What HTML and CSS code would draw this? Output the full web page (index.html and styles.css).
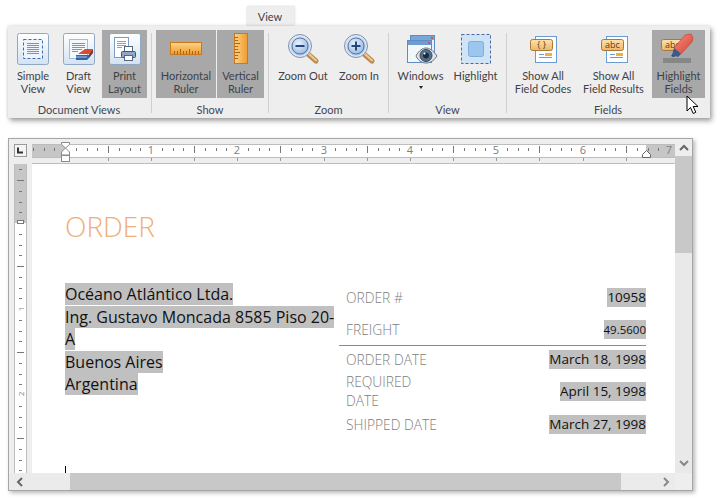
FILE: index.html
```html
<!DOCTYPE html>
<html lang="en">
<head>
<meta charset="utf-8">
<title>View ribbon</title>
<link rel="stylesheet" href="styles.css">
</head>
<body>
<svg class="defs" aria-hidden="true">
  <defs>
    <linearGradient id="gFrame" x1="0" y1="0" x2="0" y2="1"><stop offset="0" stop-color="#ffffff"/><stop offset="1" stop-color="#d3e2f2"/></linearGradient>
    <linearGradient id="gOrange" x1="0" y1="0" x2="0" y2="1"><stop offset="0" stop-color="#fbd487"/><stop offset="1" stop-color="#f09a2c"/></linearGradient>
    <linearGradient id="gOrangeH" x1="0" y1="0" x2="1" y2="0"><stop offset="0" stop-color="#fbd487"/><stop offset="1" stop-color="#f09a2c"/></linearGradient>
    <radialGradient id="gLens" cx=".4" cy=".35" r=".8"><stop offset="0" stop-color="#e9f2fb"/><stop offset="1" stop-color="#8fb2db"/></radialGradient>
    <linearGradient id="gLabel" x1="0" y1="0" x2="0" y2="1"><stop offset="0" stop-color="#fde3ae"/><stop offset="1" stop-color="#eeb566"/></linearGradient>
    <linearGradient id="gRed" x1="0" y1="0" x2="1" y2="1"><stop offset="0" stop-color="#f58d80"/><stop offset="1" stop-color="#d8412f"/></linearGradient>
    <g id="inchTicks" stroke="#777" stroke-width="1">
      <path d="M11.5 5v3M22.5 5v3M32.5 5v3M43.5 3v7M54.5 5v3M65.5 5v3M75.5 5v3"/>
    </g>
    <g id="vTicks" stroke="#777" stroke-width="1">
      <path d="M5 11.5h3M5 22.5h3M5 32.5h3M3 43.5h7M5 54.5h3M5 65.5h3M5 75.5h3"/>
    </g>
  </defs>
</svg>

<div class="tab">View</div>

<section class="ribbon">
  <div class="group">
    <div class="buttons">
      <div class="btn w44">
        <svg class="ico" width="34" height="32" viewBox="0 0 34 32"><rect x="1.5" y=".5" width="31" height="31" rx="2" fill="url(#gFrame)" stroke="#8ea9c6"/><rect x="7.5" y="6.5" width="19" height="19" fill="#eef4fb" stroke="#3b6db3" stroke-dasharray="3 2"/><path d="M11 10.5h12M11 12.5h12M11 14.5h12M11 16.5h12M11 18.5h12M11 20.5h12" stroke="#7c93b5"/></svg>
        <div class="lbl">Simple<br>View</div>
      </div>
      <div class="btn w45">
        <svg class="ico" width="34" height="32" viewBox="0 0 34 32"><rect x="1.5" y=".5" width="31" height="31" rx="2" fill="url(#gFrame)" stroke="#8ea9c6"/><rect x="7.5" y="6.5" width="18" height="19" fill="#f4f7fb" stroke="#a5bcd6"/><path d="M10 10.5h13M10 12.500h13M10 14.500h13M10 16.500h10M10 18.500h6" stroke="#7c93b5"/><path d="M16 21l7-5h8l-4 5z" fill="#d94a36"/><path d="M14 22h13v3l-2 2H14z" fill="#2f62a8"/><path d="M27 21l4-5v4l-4 5z" fill="#8a2f22"/><path d="M14 24h11" stroke="#a9c6ea"/></svg>
        <div class="lbl">Draft<br>View</div>
      </div>
      <div class="btn w45 on">
        <svg class="ico" width="34" height="32" viewBox="0 0 34 32"><rect x="1.5" y=".5" width="31" height="31" rx="2" fill="url(#gFrame)" stroke="#8ea9c6"/><rect x="6.500" y="4.500" width="14" height="20" fill="#fff" stroke="#7d9cc4"/><path d="M9 8.500h9M9 10.500h9M9 12.500h9M9 14.500h5" stroke="#8aa0c0"/><rect x="16.500" y="13.500" width="8" height="6" fill="#fff" stroke="#55667f"/><rect x="13.500" y="18.500" width="14" height="6" rx="1" fill="#8fa6c4" stroke="#44566f"/><rect x="16.500" y="22.500" width="8" height="5" fill="#fff" stroke="#55667f"/></svg>
        <div class="lbl">Print<br>Layout</div>
      </div>
    </div>
    <div class="gname">Document Views</div>
  </div>

  <div class="group">
    <div class="buttons">
      <div class="btn w60 on">
        <svg class="ico" width="34" height="32" viewBox="0 0 34 32"><rect x="1.500" y="9.500" width="31" height="12" fill="url(#gOrange)" stroke="#c9791c"/><path d="M5.500 21v-3M8.500 21v-3M11.500 21v-5M14.500 21v-3M17.500 21v-3M20.500 21v-5M23.500 21v-3M26.500 21v-3M29.500 21v-3" stroke="#a9620f"/></svg>
        <div class="lbl">Horizontal<br>Ruler</div>
      </div>
      <div class="btn w47 on">
        <svg class="ico" width="34" height="32" viewBox="0 0 34 32"><rect x="10.500" y=".5" width="13" height="30" fill="url(#gOrangeH)" stroke="#c9791c"/><path d="M11 4.500h3M11 7.500h3M11 10.500h5M11 13.500h3M11 16.500h3M11 19.500h5M11 22.500h3M11 25.500h3" stroke="#a9620f"/></svg>
        <div class="lbl">Vertical<br>Ruler</div>
      </div>
    </div>
    <div class="gname">Show</div>
  </div>

  <div class="group">
    <div class="buttons">
      <div class="btn w60">
        <svg class="ico" width="36" height="32" viewBox="0 0 36 32"><path d="M23 21l8 7" stroke="#b88a4e" stroke-width="5" stroke-linecap="round"/><path d="M23.500 20.500l7.500 7" stroke="#f0c995" stroke-width="2" stroke-linecap="round"/><circle cx="15" cy="13" r="10.500" fill="url(#gLens)" stroke="#dfe6ef" stroke-width="2"/><circle cx="15" cy="13" r="11.500" fill="none" stroke="#7d93b3"/><circle cx="15" cy="13" r="8" fill="url(#gLens)" stroke="#5379ad"/><path d="M10.500 13h9" stroke="#25467e" stroke-width="2"/></svg>
        <div class="lbl">Zoom Out</div>
      </div>
      <div class="btn w50">
        <svg class="ico" width="36" height="32" viewBox="0 0 36 32"><path d="M23 21l8 7" stroke="#b88a4e" stroke-width="5" stroke-linecap="round"/><path d="M23.500 20.500l7.500 7" stroke="#f0c995" stroke-width="2" stroke-linecap="round"/><circle cx="15" cy="13" r="10.500" fill="url(#gLens)" stroke="#dfe6ef" stroke-width="2"/><circle cx="15" cy="13" r="11.500" fill="none" stroke="#7d93b3"/><circle cx="15" cy="13" r="8" fill="url(#gLens)" stroke="#5379ad"/><path d="M10.500 13h9M15 8.500v9" stroke="#25467e" stroke-width="2"/></svg>
        <div class="lbl">Zoom In</div>
      </div>
    </div>
    <div class="gname">Zoom</div>
  </div>

  <div class="group">
    <div class="buttons">
      <div class="btn w55">
        <svg class="ico" width="40" height="32" viewBox="0 0 40 32"><rect x="9.500" y="2.500" width="24" height="20" fill="#e6f0fa" stroke="#5d8dc4"/><rect x="10" y="3" width="23" height="4" fill="#79a6d8"/><rect x="30" y="4" width="2" height="2" fill="#e0503a"/><rect x="6.500" y="7.500" width="24" height="22" fill="#f2f7fc" stroke="#5d8dc4"/><rect x="7" y="8" width="23" height="4" fill="#6d9cd2"/><rect x="27" y="9" width="2" height="2" fill="#e0503a"/><path d="M15 23c3-6 7-8 10-8s7 2 11 8c-4 6-8 7-11 7s-7-1-10-7z" fill="#dfe4ea" stroke="#6c7480"/><circle cx="25" cy="22.500" r="6" fill="#51708f" stroke="#3a4653"/><circle cx="25" cy="22.500" r="3" fill="#1e2a38"/><circle cx="23.500" cy="20.500" r="1" fill="#fff"/></svg>
        <div class="lbl">Windows<span class="caret"></span></div>
      </div>
      <div class="btn w53">
        <svg class="ico" width="32" height="32" viewBox="0 0 32 32"><rect x="1.500" y="1.500" width="29" height="29" fill="#cfe4f4" stroke="#4a68a8" stroke-dasharray="3 2"/><rect x="8.500" y="8.500" width="15" height="15" rx="2" fill="#9cc6ee" stroke="#7fadde"/></svg>
        <div class="lbl">Highlight</div>
      </div>
    </div>
    <div class="gname">View</div>
  </div>

  <div class="group last">
    <div class="buttons">
      <div class="btn w64">
        <svg class="ico" width="32" height="32" viewBox="0 0 32 32"><rect x="8.500" y="3.500" width="21" height="26" fill="#fff" stroke="#6b9bd0"/><rect x="3.500" y="6.500" width="22" height="11" rx="2" fill="url(#gLabel)" stroke="#a9793a"/><text class="tag" x="14.500" y="15" text-anchor="middle">{ }</text><path d="M12 21.500h5M12 24.500h13" stroke="#6b9bd0"/><rect x="18" y="20" width="7" height="3" fill="#eeb23c"/></svg>
        <div class="lbl">Show All<br>Field Codes</div>
      </div>
      <div class="btn w75">
        <svg class="ico" width="32" height="32" viewBox="0 0 32 32"><rect x="8.500" y="3.500" width="21" height="26" fill="#fff" stroke="#6b9bd0"/><rect x="3.500" y="6.500" width="22" height="11" rx="2" fill="url(#gLabel)" stroke="#a9793a"/><text class="tag" x="14.500" y="15" text-anchor="middle">abc</text><path d="M12 21.500h5M12 24.500h13" stroke="#6b9bd0"/><rect x="18" y="20" width="7" height="3" fill="#eeb23c"/></svg>
        <div class="lbl">Show All<br>Field Results</div>
      </div>
      <div class="btn w53 on">
        <svg class="ico" width="40" height="32" viewBox="0 0 40 32"><rect x="2.500" y="6.500" width="22" height="11" rx="2" fill="url(#gLabel)" stroke="#a9793a"/><text class="tag" x="13.500" y="15" text-anchor="middle">abc</text><rect x="4" y="25" width="28" height="5" fill="#878787"/><path d="M26 2l6-1 2 4-1 4-11 12-7-6z" fill="url(#gRed)" stroke="#c23a2a" stroke-width=".6"/><path d="M15 15l7 6-3 3-6-2z" fill="#3b5a8c"/><path d="M13 22l-1 1 3 1 1-1z" fill="#1f2f4d"/></svg>
        <div class="lbl">Highlight<br>Fields</div>
      </div>
    </div>
    <div class="gname">Fields</div>
  </div>
</section>

<svg class="pointer" width="14" height="20" viewBox="0 0 14 20"><path d="M1 1v15l3.500-3.500 2.700 6 2.600-1.200-2.600-5.800H12z" fill="#fff" stroke="#000" stroke-linejoin="round"/></svg>

<section class="window">
  <div class="corner"><div class="tabstop"><svg width="11" height="11" viewBox="0 0 11 11"><path d="M3 2.500v5h5" fill="none" stroke="#333" stroke-width="2"/></svg></div></div>

  <div class="hruler">
    <svg class="hticks" width="643" height="20" viewBox="0 0 643 20">
      <use href="#inchTicks" x="-53"/><use href="#inchTicks" x="33"/><use href="#inchTicks" x="119"/><use href="#inchTicks" x="205"/><use href="#inchTicks" x="292"/><use href="#inchTicks" x="378"/><use href="#inchTicks" x="464"/><use href="#inchTicks" x="551"/>
      <g class="rnum" text-anchor="middle"><text x="119" y="11">1</text><text x="205" y="11">2</text><text x="292" y="11">3</text><text x="378" y="11">4</text><text x="464" y="11">5</text><text x="551" y="11">6</text><text x="637" y="11">7</text></g>
      <path d="M33.500 15v3M76.500 15v3M119.500 15v3M162.500 15v3M205.500 15v3M248.500 15v3M292.500 15v3M335.500 15v3M378.500 15v3M421.500 15v3M464.500 15v3M507.500 15v3M551.500 15v3M594.500 15v3" stroke="#999"/>
    </svg>
    <svg class="marker m-left" width="10" height="21" viewBox="0 0 10 21"><path d="M.5.500h8v2L4.500 6l4 4v3h-8v-3l4-4-4-3.500z" fill="#fff" stroke="#8a8a8a"/><rect x=".5" y="13.500" width="8" height="6" fill="#fff" stroke="#8a8a8a"/></svg>
    <svg class="marker m-right" width="10" height="10" viewBox="0 0 10 10"><path d="M.5 8.500v-3l4-4 4 4v3z" fill="#fff" stroke="#666"/></svg>
  </div>

  <div class="vscroll">
    <div class="sbtn"><svg width="10" height="7" viewBox="0 0 10 7"><path d="M1 6l4-4 4 4" fill="none" stroke="#666" stroke-width="2"/></svg></div>
    <div class="vthumb"></div>
    <div class="vtrack"><svg width="10" height="7" viewBox="0 0 10 7"><path d="M1 1l4 4 4-4" fill="none" stroke="#888" stroke-width="2"/></svg></div>
  </div>

  <div class="vside">
    <svg class="vticks" width="13" height="309" viewBox="0 0 13 309">
      <use href="#vTicks" y="-27"/><use href="#vTicks" y="59"/><use href="#vTicks" y="145"/><use href="#vTicks" y="231"/>
      <g class="rnum vnum" text-anchor="middle"><text transform="translate(10 145) rotate(-90)">1</text><text transform="translate(10 230) rotate(-90)">2</text></g>
      <rect x="3.500" y="56.500" width="6" height="3" fill="#fff" stroke="#777"/>
    </svg>
  </div>

  <main class="page">
    <h1 class="title">ORDER</h1>
    <div class="doc">
      <p class="address"><span class="hl">Océano Atlántico Ltda.<br>Ing. Gustavo Moncada 8585 Piso 20-A<br>Buenos Aires<br>Argentina</span></p>
      <div class="facts">
        <div class="row r1"><span class="k">ORDER #</span><span class="v hl">10958</span></div>
        <div class="row r2"><span class="k">FREIGHT</span><span class="v small hl">49.5600</span></div>
        <div class="row r3"><span class="k">ORDER DATE</span><span class="v hl">March 18, 1998</span></div>
        <div class="row r4"><span class="k">REQUIRED<br>DATE</span><span class="v hl">April 15, 1998</span></div>
        <div class="row r5"><span class="k">SHIPPED DATE</span><span class="v hl">March 27, 1998</span></div>
      </div>
    </div>
    <div class="caretline"></div>
  </main>

  <div class="hscroll">
    <div class="hleft"><svg width="7" height="10" viewBox="0 0 7 10"><path d="M6 1L2 5l4 4" fill="none" stroke="#666" stroke-width="2"/></svg></div>
    <div class="hthumb"></div>
    <div class="hright"><svg width="7" height="10" viewBox="0 0 7 10"><path d="M1 1l4 4-4 4" fill="none" stroke="#888" stroke-width="2"/></svg></div>
  </div>
  <div class="scorner"></div>
</section>
</body>
</html>
```

FILE: styles.css
```css
* { box-sizing: border-box; }
html, body { margin: 0; padding: 0; }
body {
  position: relative;
  width: 719px;
  height: 501px;
  overflow: hidden;
  background: #fff;
  font-family: "Open Sans", "Noto Sans", sans-serif;
  color: #3e4249;
  padding-top: 7px;
}
.defs { position: absolute; width: 0; height: 0; }

.tab {
  width: 48px;
  height: 19px;
  margin-left: 246px;
  background: #eee;
  font-family: Lato, "Open Sans", sans-serif;
  font-size: 11px;
  line-height: 20px;
  text-align: center;
  box-shadow: 1px -1px 2px rgba(0,0,0,.12);
  position: relative;
}

.ribbon {
  position: relative;
  display: flex;
  width: 702px;
  height: 92px;
  margin-left: 8px;
  padding: 4px 0 0 3px;
  background: #eee;
  font-family: Lato, "Open Sans", sans-serif;
  box-shadow: 2px 3px 5px rgba(0,0,0,.35), 0 0 3px rgba(0,0,0,.15);
}
.group { position: relative; display: flex; flex-direction: column; padding-right: 9px; }
.group::after {
  content: "";
  position: absolute;
  right: 4px;
  top: 3px;
  bottom: 5px;
  width: 1px;
  background: #cfcfcf;
}
.group.last { padding-right: 0; }
.group.last::after { display: none; }
.buttons { display: flex; flex: none; gap: 1px; height: 68px; }
.gname { height: 20px; font-size: 11px; line-height: 24px; text-align: center; color: #3e4654; }
.btn {
  display: flex;
  flex-direction: column;
  align-items: center;
  padding-top: 3px;
}
.btn.on { background: #a8a8a8; }
.ico { flex: none; display: block; }
.lbl { margin-top: 4px; font-size: 11px; line-height: 13px; text-align: center; white-space: nowrap; }
.w44 { width: 44px; } .w45 { width: 45px; } .w47 { width: 47px; } .w50 { width: 50px; }
.w53 { width: 53px; } .w55 { width: 55px; } .w60 { width: 60px; }
.w64 { width: 64px; } .w75 { width: 75px; }
.caret {
  display: block;
  width: 0;
  height: 0;
  margin: 4px auto 0;
  border: 2.500px solid transparent;
  border-top: 3px solid #222;
  border-bottom: 0;
}
.tag { font-family: "Open Sans", sans-serif; font-size: 9px; fill: #5a4020; }
.pointer { position: absolute; left: 686px; top: 95px; }

.window {
  display: grid;
  grid-template-columns: 23px 643px 17px;
  grid-template-rows: 25px 309px 17px;
  width: 685px;
  height: 353px;
  margin: 20px 0 0 8px;
  border: 1px solid #a6a6a6;
  background: #eee;
  box-shadow: 2px 2px 4px rgba(0,0,0,.28);
}
.corner { padding: 5px 0 0 5px; }
.tabstop {
  width: 13px;
  height: 13px;
  border: 1px solid #9a9a9a;
  background: #f4f4f4;
}
.tabstop svg { display: block; }
.hruler {
  position: relative;
  border-bottom: 1px solid #bdbdbd;
  background:
    linear-gradient(#bdbdbd, #bdbdbd) 0 5px / 100% 1px no-repeat,
    linear-gradient(#bdbdbd, #bdbdbd) 0 18px / 100% 1px no-repeat,
    linear-gradient(to right, #c6c6c6 33px, #fff 33px, #fff 614px, #c6c6c6 614px) 0 6px / 100% 12px no-repeat;
}
.hticks { position: absolute; left: 0; top: 4px; overflow: hidden; }
.rnum text { font-family: "Open Sans", sans-serif; font-size: 11px; fill: #7a7f86; }
.marker { position: absolute; }
.m-left { left: 29px; top: 3px; }
.m-right { left: 610px; top: 10px; }

.vscroll { grid-column: 3; grid-row: 1 / 3; display: flex; flex-direction: column; }
.sbtn { height: 17px; display: flex; align-items: center; justify-content: center; background: #eee; }
.vthumb { height: 97px; background: #c8c8c8; }
.vtrack {
  flex: 1;
  background: #e9e9e9;
  display: flex;
  align-items: flex-end;
  justify-content: center;
  padding-bottom: 6px;
}

.vside { padding-left: 5px; }
.vticks {
  display: block;
  background: linear-gradient(#c6c6c6 59px, #fff 59px);
  box-shadow: inset 1px 0 #bdbdbd, inset -1px 0 #bdbdbd;
}
.vnum text { font-size: 8px; }

.page {
  position: relative;
  overflow: hidden;
  background: #fff;
  padding: 45px 0 0 33px;
}
.title {
  margin: 0;
  font-size: 28px;
  font-weight: 300;
  line-height: 34px;
  color: #f0ae78;
}
.doc { display: flex; margin-top: 40px; }
.address {
  width: 274px;
  margin: 0;
  font-size: 16px;
  line-height: 22.500px;
  color: #111;
}
.hl { background: #c0c0c0; }
.facts { width: 307px; padding-top: 5px; }
.row {
  display: flex;
  justify-content: space-between;
  align-items: center;
  padding-left: 7px;
  font-size: 13.500px;
  line-height: 19px;
}
.k { color: #7d7d7d; font-size: 13.800px; font-weight: 300; }
.v { color: #111; line-height: 19px; }
.small { font-size: 11.500px; }
.r1 { height: 19px; }
.r2 { height: 39px; padding-top: 9px; padding-bottom: 3px; border-bottom: 1px solid #8a8a8a; }
.r3 { height: 26px; }
.r4 { height: 38px; }
.r5 { height: 28px; }

.caretline {
  position: absolute;
  left: 33px;
  bottom: 0;
  width: 1px;
  height: 7px;
  background: #000;
}

.hscroll { grid-column: 1 / 3; grid-row: 3; display: flex; }
.hleft { width: 61px; display: flex; align-items: center; padding-left: 7px; background: #ebebeb; }
.hthumb { width: 551px; background: #c8c8c8; }
.hright { flex: 1; display: flex; align-items: center; justify-content: flex-end; padding-right: 5px; background: #ebebeb; }
.scorner { background: #eee; }
```
